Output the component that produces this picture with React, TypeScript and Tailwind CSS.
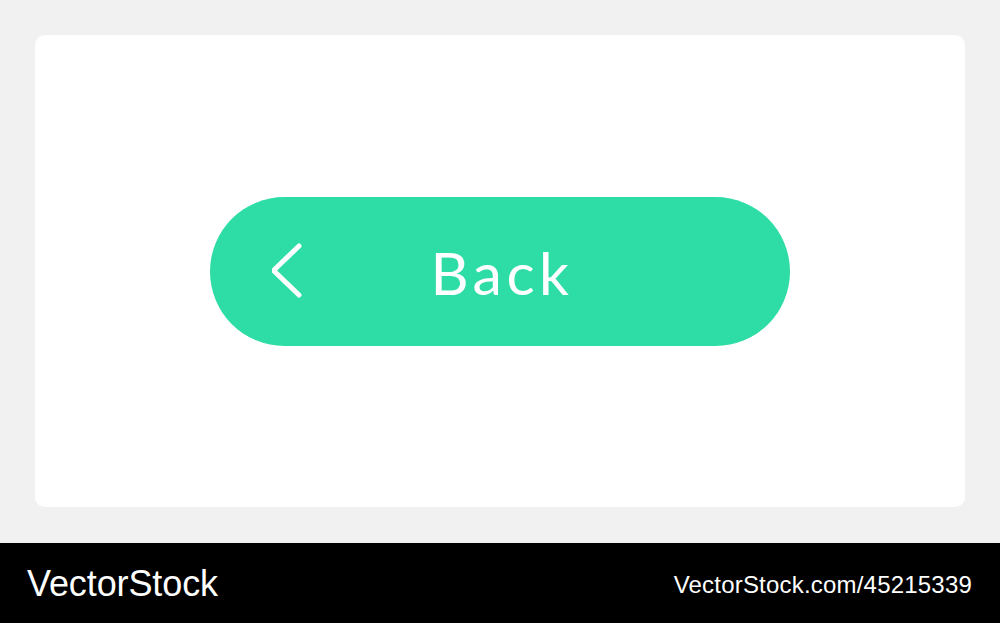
export default function App() {
    return (
        <div className="w-[1000px] h-[623px] bg-[#f1f1f1] flex flex-col">
            <div className="flex-1 px-[35px] pt-[35px] pb-[36px]">
                <div className="h-full rounded-[10px] bg-white flex items-center justify-center">
                    <button className="relative w-[580px] h-[149px] rounded-full bg-[#2ddda5] flex items-center justify-center">
                        <svg className="absolute left-[62px] top-[45px]" width="40" height="60" viewBox="0 0 40 60">
                            <path d="M27 4 L1.5 28.5 L27 53" fill="none" stroke="white" strokeWidth="5" strokeLinecap="round" strokeLinejoin="round" />
                        </svg>
                        <span className="text-white text-[59px] leading-none tracking-[4.5px] pl-[4px] font-['Lato',sans-serif] mt-[2px]">Back</span>
                    </button>
                </div>
            </div>
            <div className="h-[80px] bg-black flex items-center justify-between px-[27px] pr-[28px] font-['Liberation_Sans',Arial,sans-serif] text-white">
                <span className="text-[36px] tracking-[-0.1px] leading-none mt-[2px]">VectorStock</span>
                <span className="text-[24px] tracking-[0.2px] leading-none mt-[4px]">VectorStock.com/45215339</span>
            </div>
        </div>
    );
}
